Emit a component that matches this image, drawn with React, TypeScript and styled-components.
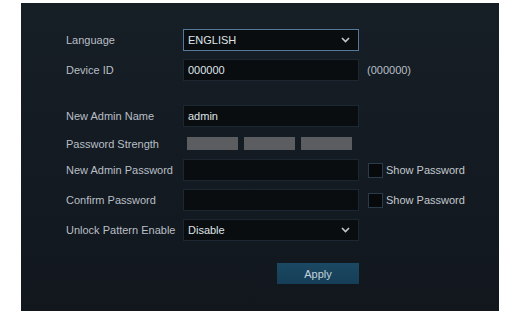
import React from "react";
import styled, { createGlobalStyle } from "styled-components";

const GlobalStyle = createGlobalStyle`
  body {
    margin: 0;
    background: #ffffff;
    font-family: "Liberation Sans", Arial, sans-serif;
  }
`;

const Panel = styled.div`
  margin: 3px 0 0 21px;
  width: 478px;
  height: 308px;
  box-sizing: border-box;
  padding: 26px 0 0 45px;
  background: linear-gradient(180deg, #161e26 0%, #131a21 60%, #11171d 100%);
  display: flex;
  flex-direction: column;
`;

const Row = styled.div<{ $mt?: number; $h?: number }>`
  display: flex;
  align-items: center;
  height: ${p => p.$h ?? 22}px;
  margin-top: ${p => p.$mt ?? 0}px;
`;

const Label = styled.div`
  width: 117px;
  flex: none;
  font-size: 11px;
  color: #b9bfc5;
  white-space: nowrap;
`;

const Field = styled.div<{ $focus?: boolean }>`
  width: 176px;
  height: 22px;
  box-sizing: border-box;
  flex: none;
  display: flex;
  align-items: center;
  justify-content: space-between;
  padding: 0 8px 0 4px;
  background: #0a0d10;
  border: 1px solid ${p => (p.$focus ? "#56799b" : "#1d2731")};
  font-size: 11px;
  color: #dfe3e7;
`;

const Chevron = () => (
  <svg width="9" height="6" viewBox="0 0 9 6">
    <path d="M1 1l3.5 3.5L8 1" stroke="#c3c8cd" strokeWidth="1.6" fill="none" />
  </svg>
);

const Hint = styled.span`
  margin-left: 8px;
  font-size: 11px;
  color: #b9bfc5;
`;

const Bars = styled.div`
  display: flex;
  gap: 6px;
  padding-left: 4px;
`;

const Bar = styled.div`
  width: 51px;
  height: 13px;
  background: #5b5d60;
`;

const Check = styled.label`
  display: flex;
  align-items: center;
  margin-left: 9px;
  font-size: 11px;
  color: #c3c8cd;
  gap: 3px;
`;

const Box = styled.span`
  width: 15px;
  height: 15px;
  box-sizing: border-box;
  background: #07090b;
  border: 1px solid #2a3b4c;
`;

const ApplyButton = styled.button`
  margin-left: 211px;
  width: 82px;
  height: 21px;
  border: none;
  background: linear-gradient(180deg, #1b4863, #163e57);
  color: #c3d2dc;
  font-family: "Liberation Sans", Arial, sans-serif;
  font-size: 11px;
  padding: 0;
`;

export default function App() {
  return (
    <>
      <GlobalStyle />
      <Panel>
        <Row>
          <Label>Language</Label>
          <Field $focus>
            ENGLISH
            <Chevron />
          </Field>
        </Row>
        <Row $mt={8}>
          <Label>Device ID</Label>
          <Field>000000</Field>
          <Hint>(000000)</Hint>
        </Row>
        <Row $mt={24}>
          <Label>New Admin Name</Label>
          <Field>admin</Field>
        </Row>
        <Row $mt={10} $h={13}>
          <Label>Password Strength</Label>
          <Bars>
            <Bar />
            <Bar />
            <Bar />
          </Bars>
        </Row>
        <Row $mt={9}>
          <Label>New Admin Password</Label>
          <Field />
          <Check>
            <Box />
            Show Password
          </Check>
        </Row>
        <Row $mt={8}>
          <Label>Confirm Password</Label>
          <Field />
          <Check>
            <Box />
            Show Password
          </Check>
        </Row>
        <Row $mt={8}>
          <Label>Unlock Pattern Enable</Label>
          <Field>
            Disable
            <Chevron />
          </Field>
        </Row>
        <Row $mt={22} $h={21}>
          <ApplyButton>Apply</ApplyButton>
        </Row>
      </Panel>
    </>
  );
}
